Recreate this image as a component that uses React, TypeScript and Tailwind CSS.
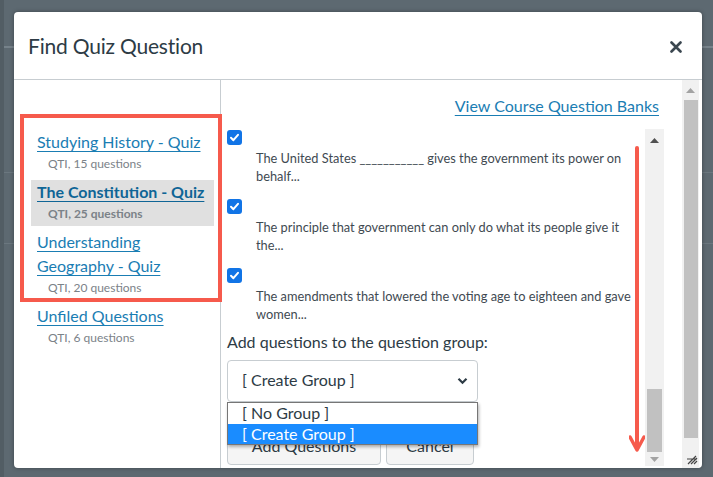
import React from "react";

const banks = [
  { title: ["Studying History - Quiz"], meta: "QTI, 15 questions", selected: false },
  { title: ["The Constitution - Quiz"], meta: "QTI, 25 questions", selected: true },
  { title: ["Understanding", "Geography - Quiz"], meta: "QTI, 20 questions", selected: false },
  { title: ["Unfiled Questions"], meta: "QTI, 6 questions", selected: false },
];

const questions = [
  ["The United States ___________ gives the government its power on", "behalf..."],
  ["The principle that government can only do what its people give it", "the..."],
  ["The amendments that lowered the voting age to eighteen and gave", "women..."],
];

function Checked() {
  return (
    <div className="w-[15px] h-[15px] rounded-[3px] bg-[#1174e6] flex items-center justify-center">
      <svg width="11" height="11" viewBox="0 0 11 11">
        <polyline points="2,5.8 4.4,8.2 9,2.8" fill="none" stroke="white" strokeWidth="2" strokeLinecap="round" strokeLinejoin="round" />
      </svg>
    </div>
  );
}

export default function App() {
  return (
    <div className="relative w-[713px] h-[477px] overflow-hidden bg-[#5d6971] font-['Lato','Noto_Sans',sans-serif] pt-[12px] pl-[14px]">
      {/* page under the overlay */}
      <div className="absolute left-0 top-[46px] w-full h-[2px] bg-[#76828a]" />
      <div className="absolute left-0 top-[172px] w-full h-px bg-[#6b777f]" />
      <div className="absolute left-0 top-[243px] w-full h-px bg-[#6b777f]" />
      <div className="absolute left-0 top-0 w-[4px] h-full bg-[#525d64]" />

      {/* dialog */}
      <div className="relative w-[688px] h-[456px] bg-white rounded-[4px] flex flex-col overflow-hidden shadow-[0_0_4px_rgba(0,0,0,0.35)]">
        <div className="h-[68px] shrink-0 border-b border-[#c7cdd1] flex items-center justify-between pl-[14px] pr-[20px]">
          <span className="text-[21px] text-[#2d3b45] tracking-[-0.2px]">Find Quiz Question</span>
          <svg width="12" height="12" viewBox="0 0 12 12" className="mt-[2px]">
            <path d="M1.5 1.5 L10.5 10.5 M10.5 1.5 L1.5 10.5" stroke="#3b4750" strokeWidth="2.6" strokeLinecap="round" />
          </svg>
        </div>

        <div className="flex flex-1 min-h-0">
          {/* banks */}
          <div className="w-[207px] shrink-0 border-r border-[#c7cdd1] pt-[50px] pl-[17px] pr-[6px]">
            {banks.map((b) => (
              <div key={b.meta} className={`pb-[2px] mb-[4px] ${b.selected ? "bg-[#e0e0e0]" : ""}`}>
                <div className={`pl-[6px] text-[16px] leading-[24px] whitespace-nowrap underline underline-offset-[3px] decoration-1 ${b.selected ? "font-bold text-[#0f6596]" : "text-[#1a7db3]"}`}>
                  {b.title.map((t) => (
                    <div key={t}>{t}</div>
                  ))}
                </div>
                <div className={`pl-[17px] text-[12px] leading-[20px] text-[#7b8288] ${b.selected ? "font-bold" : ""}`}>{b.meta}</div>
              </div>
            ))}
          </div>

          {/* questions */}
          <div className="flex-1 flex flex-col">
            <div className="pt-[14px] pr-[23px] h-[38px] text-right text-[16px] leading-[24px] text-[#1a7db3] underline underline-offset-[3px] decoration-1">
              View Course Question Banks
            </div>
            <div className="mt-[11px] mr-[18px] h-[337px] flex">
              <div className="relative flex-1 overflow-hidden pl-[6px] pt-[1px]">
                {questions.map((q) => (
                  <div key={q[0]} className="h-[69px]">
                    <Checked />
                    <div className="mt-[4px] pl-[29px] text-[12.8px] leading-[18px] text-[#3f4a52] whitespace-nowrap">
                      <div>{q[0]}</div>
                      <div>{q[1]}</div>
                    </div>
                  </div>
                ))}
                <div className="-mt-[14px] pt-[7px] text-[16px] leading-[24px] text-[#2d3b45]">Add questions to the question group:</div>
                <div className="relative mt-[6px] w-[251px]">
                  <div className="h-[42px] border border-[#c7cdd1] rounded-[4px] flex items-center justify-between pl-[14px] pr-[9px] text-[16px] text-[#2d3b45]">
                    <span className="-mt-[2px]">[ Create Group ]</span>
                    <svg width="11" height="8" viewBox="0 0 11 8">
                      <polyline points="1.5,1.8 5.5,5.8 9.5,1.8" fill="none" stroke="#2d3b45" strokeWidth="2.2" />
                    </svg>
                  </div>
                  <div className="flex gap-[5px] mt-[25px]">
                    <div className="w-[154px] h-[38px] border border-[#c7cdd1] rounded-[4px] bg-[#f5f5f5] flex items-center justify-center text-[16px] text-[#2d3b45]">Add Questions</div>
                    <div className="w-[88px] h-[38px] border border-[#c7cdd1] rounded-[4px] bg-[#f5f5f5] flex items-center justify-center text-[16px] text-[#2d3b45]">Cancel</div>
                  </div>
                  <div className="absolute left-0 top-[42px] w-[251px] bg-white border border-[#767676] shadow-[1px_2px_3px_rgba(0,0,0,0.3)] text-[16px] leading-[19px]">
                    <div className="h-[21px] pl-[14px] text-[#2d3b45]">[ No Group ]</div>
                    <div className="h-[20px] pl-[14px] bg-[#1a8cff] text-white">[ Create Group ]</div>
                  </div>
                </div>
              </div>
              {/* inner scrollbar */}
              <div className="w-[19px] shrink-0 bg-[#f1f1f1] flex flex-col items-center">
                <div className="h-[22px] flex items-center justify-center">
                  <svg width="9" height="5" viewBox="0 0 9 5"><polygon points="0,5 4.5,0 9,5" fill="#505050" /></svg>
                </div>
                <div className="flex-1" />
                <div className="w-[15px] h-[63px] bg-[#c1c1c1]" />
                <div className="h-[14px] flex items-center justify-center">
                  <svg width="9" height="5" viewBox="0 0 9 5"><polygon points="0,0 9,0 4.5,5" fill="#a3a3a3" /></svg>
                </div>
              </div>
            </div>
          </div>

          {/* dialog scrollbar */}
          <div className="w-[17px] shrink-0 mr-[3px] bg-[#f1f1f1] flex flex-col items-center">
            <div className="h-[20px] flex items-center justify-center">
              <svg width="9" height="5" viewBox="0 0 9 5"><polygon points="0,5 4.5,0 9,5" fill="#a3a3a3" /></svg>
            </div>
            <div className="w-[14px] h-[338px] bg-[#c1c1c1]" />
          </div>
        </div>

        {/* resize grip */}
        <svg className="absolute right-[4px] bottom-[3px]" width="12" height="12" viewBox="0 0 12 12">
          <path d="M2 11 L10 3 M5 11 L11 5 M8 11 L11 8 M1 6 L11 6" stroke="#444" strokeWidth="1.2" />
        </svg>
      </div>

      {/* annotations */}
      <div className="absolute left-[20px] top-[114px] w-[202px] h-[188px] border-[4px] border-[#f65a4c]" />
      <svg className="absolute left-[629px] top-[145px]" width="16" height="310" viewBox="0 0 16 310">
        <line x1="8" y1="3" x2="8" y2="303" stroke="#f65a4c" strokeWidth="4" strokeLinecap="round" />
        <polyline points="1,292 8,305 15,292" fill="none" stroke="#f65a4c" strokeWidth="3.5" strokeLinecap="round" strokeLinejoin="round" />
      </svg>
    </div>
  );
}
